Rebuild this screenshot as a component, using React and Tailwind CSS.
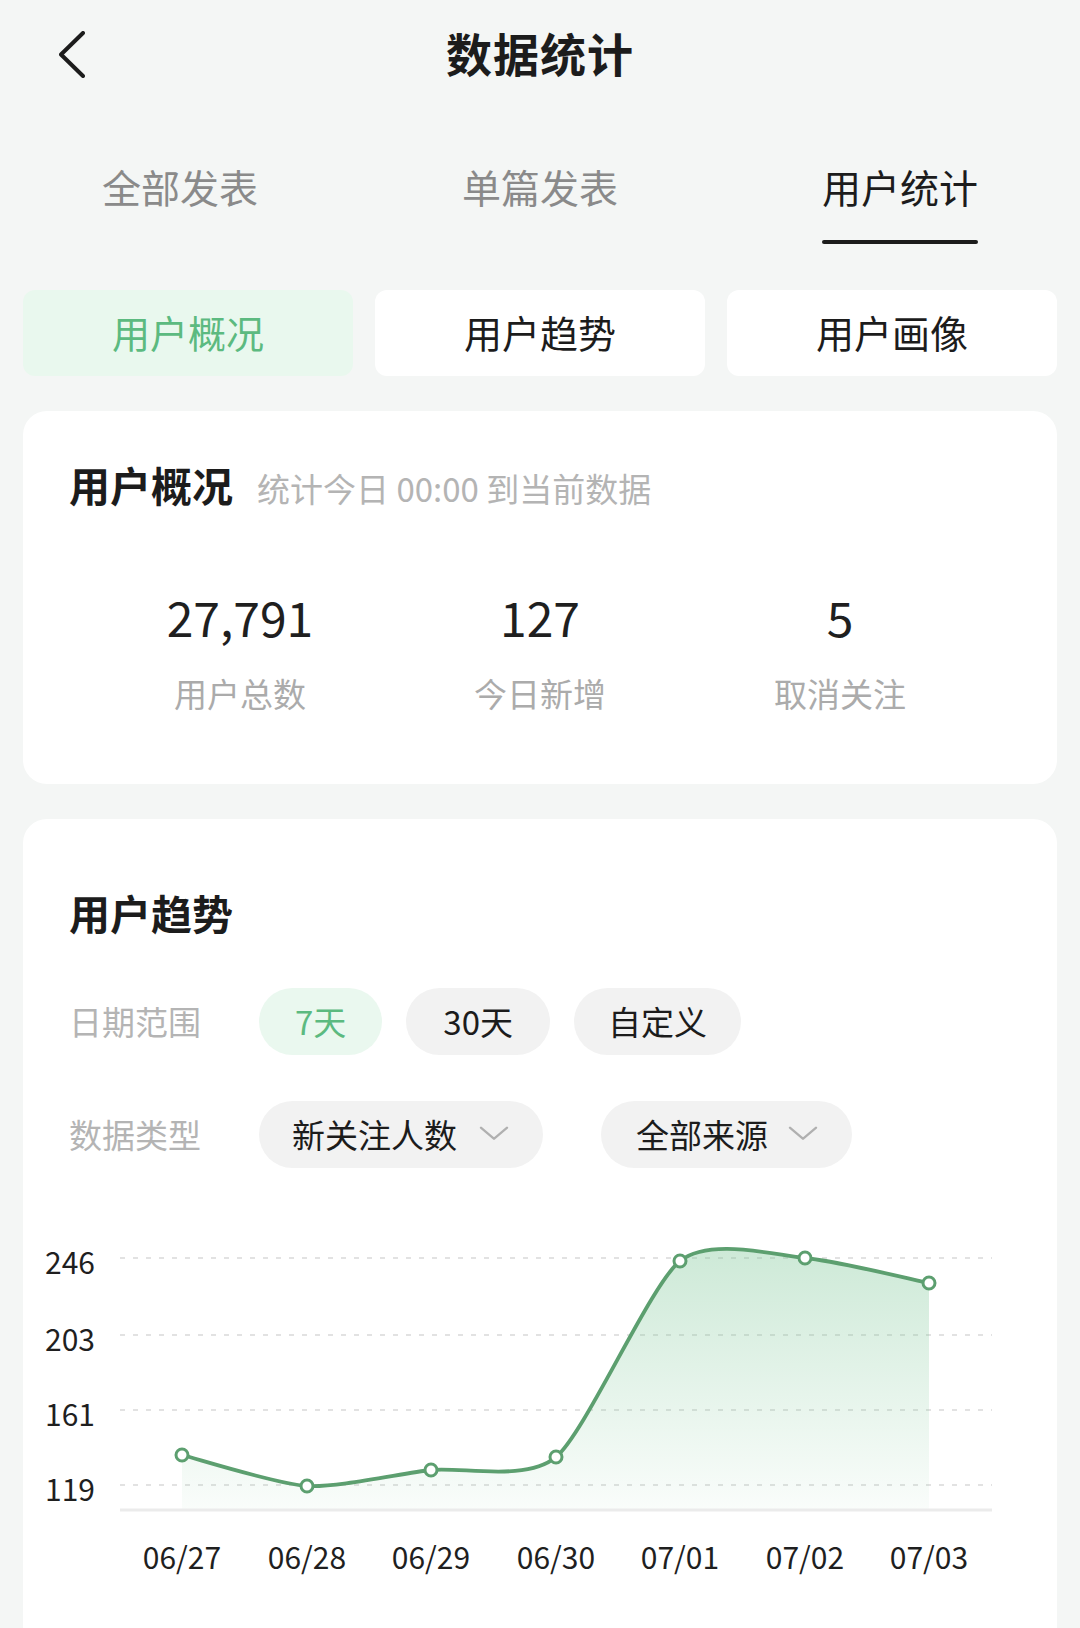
import React from "react";

const tabs = ["全部发表", "单篇发表", "用户统计"];
const subTabs = ["用户概况", "用户趋势", "用户画像"];

const stats = [
  { value: "27,791", label: "用户总数" },
  { value: "127", label: "今日新增" },
  { value: "5", label: "取消关注" },
];

// chart coordinates are in svg px (svg sits at the card's left edge)
const points = [
  { x: 159, y: 256, label: "06/27" },
  { x: 284, y: 287, label: "06/28" },
  { x: 408, y: 271, label: "06/29" },
  { x: 533, y: 258, label: "06/30" },
  { x: 657, y: 62, label: "07/01" },
  { x: 782, y: 59, label: "07/02" },
  { x: 906, y: 84, label: "07/03" },
];

const gridLines = [
  { y: 59, label: "246" },
  { y: 136, label: "203" },
  { y: 211, label: "161" },
  { y: 286, label: "119" },
];

const smoothPath = (pts, k = 0.12) => {
  let d = `M ${pts[0].x} ${pts[0].y}`;
  for (let i = 0; i < pts.length - 1; i++) {
    const p0 = pts[i - 1] || pts[i];
    const p1 = pts[i];
    const p2 = pts[i + 1];
    const p3 = pts[i + 2] || p2;
    const c1x = p1.x + (p2.x - p0.x) * k;
    const c1y = p1.y + (p2.y - p0.y) * k;
    const c2x = p2.x - (p3.x - p1.x) * k;
    const c2y = p2.y - (p3.y - p1.y) * k;
    d += ` C ${c1x} ${c1y}, ${c2x} ${c2y}, ${p2.x} ${p2.y}`;
  }
  return d;
};

const Chevron = () => (
  <svg width="30" height="28" viewBox="0 0 30 28" fill="none">
    <path d="M2 2 L15 15 L28 2" stroke="#b0b0b0" strokeWidth="2.5" strokeLinecap="round" strokeLinejoin="round" transform="translate(0 5) scale(1 0.85)" />
  </svg>
);

const TrendChart = () => {
  const line = smoothPath(points);
  const area = `${line} L 906 311 L 159 311 Z`;
  return (
    <svg width="1034" height="420" viewBox="0 0 1034 420" className="block">
      <defs>
        <linearGradient id="areaFill" x1="0" y1="0" x2="0" y2="1">
          <stop offset="0%" stopColor="#7cc696" stopOpacity="0.38" />
          <stop offset="100%" stopColor="#7cc696" stopOpacity="0.04" />
        </linearGradient>
      </defs>
      {gridLines.map((g) => (
        <g key={g.label}>
          <line x1="97" x2="969" y1={g.y} y2={g.y} stroke="#e2e2e2" strokeWidth="2" strokeDasharray="5 8" />
          <text x="22" y={g.y + 3} dominantBaseline="central" fontSize="30" fill="#1f1f1f" fontFamily="'Noto Sans CJK SC', sans-serif">
            {g.label}
          </text>
        </g>
      ))}
      <path d={area} fill="url(#areaFill)" />
      <line x1="97" x2="969" y1="311" y2="311" stroke="#ebebeb" strokeWidth="3" />
      <path d={line} fill="none" stroke="#5c9f6f" strokeWidth="3.8" strokeLinecap="round" />
      {points.map((p) => (
        <circle key={p.label} cx={p.x} cy={p.y} r="6" fill="#fff" stroke="#5c9f6f" strokeWidth="3" />
      ))}
      {points.map((p) => (
        <text key={p.label} x={p.x} y="357" textAnchor="middle" dominantBaseline="central" fontSize="30" fill="#1f1f1f" fontFamily="'Noto Sans CJK SC', sans-serif">
          {p.label}
        </text>
      ))}
    </svg>
  );
};

export default function App() {
  return (
    <div className="min-h-screen bg-[#f4f6f5] font-['Noto_Sans_CJK_SC',sans-serif] text-[#1c1c1c] overflow-hidden">
      {/* Header */}
      <header className="h-[108px] grid grid-cols-[1fr_auto_1fr] items-center px-[59px]">
        <svg width="26" height="47" viewBox="0 0 26 47" fill="none">
          <path d="M24 2 L2 23.5 L24 45" stroke="#1c1c1c" strokeWidth="4" strokeLinecap="round" strokeLinejoin="round" />
        </svg>
        <h1 className="text-[46px] leading-none font-bold tracking-[1px] -mt-[5px]">数据统计</h1>
        <div />
      </header>

      {/* Top tabs */}
      <div className="grid grid-cols-3 pt-[59px]">
        {tabs.map((t, i) => (
          <div key={t} className="flex flex-col items-center">
            <div className="flex flex-col items-stretch">
              <span className={`text-[39px] leading-[39px] ${i === 2 ? "text-[#1c1c1c]" : "text-[#8a8a8a]"}`}>{t}</span>
              <span className={`mt-[34px] h-[4px] rounded-full ${i === 2 ? "bg-[#1c1c1c]" : "bg-transparent"}`} />
            </div>
          </div>
        ))}
      </div>

      {/* Sub tabs */}
      <div className="grid grid-cols-3 gap-[22px] px-[23px] mt-[46px]">
        {subTabs.map((t, i) => (
          <div
            key={t}
            className={`h-[86px] pb-[3px] rounded-[12px] flex items-center justify-center text-[38px] ${
              i === 0 ? "bg-[#e9f8ee] text-[#5cba80]" : "bg-white text-[#1c1c1c]"
            }`}
          >
            {t}
          </div>
        ))}
      </div>

      {/* Overview card */}
      <section className="mx-[23px] mt-[35px] rounded-[24px] bg-white pt-[52px] pb-[74px]">
        <div className="flex items-baseline px-[46px]">
          <h2 className="text-[41px] leading-[42px] font-bold">用户概况</h2>
          <span className="ml-[24px] text-[33px] leading-[42px] text-[#b4b4b4]">统计今日 00:00 到当前数据</span>
        </div>
        <div className="grid grid-cols-3 px-[67px] mt-[82px]">
          {stats.map((s) => (
            <div key={s.label} className="flex flex-col items-center">
              <span className="text-[48px] leading-[50px] text-[#1f1f1f]">{s.value}</span>
              <span className="mt-[36px] text-[33px] leading-[33px] text-[#ababab]">{s.label}</span>
            </div>
          ))}
        </div>
      </section>

      {/* Trend card */}
      <section className="mx-[23px] mt-[35px] rounded-t-[24px] bg-white pt-[72px] pb-[60px]">
        <h2 className="px-[46px] text-[41px] leading-[42px] font-bold">用户趋势</h2>

        <div className="flex items-center px-[46px] mt-[55px]">
          <span className="w-[190px] text-[33px] text-[#b4b4b4]">日期范围</span>
          <div className="flex gap-[24px]">
            <span className="h-[67px] px-[36px] rounded-full flex items-center text-[33px] bg-[#eaf8ef] text-[#5cba80]">7天</span>
            <span className="h-[67px] px-[37px] rounded-full flex items-center text-[33px] bg-[#f2f2f2]">30天</span>
            <span className="h-[67px] px-[34px] rounded-full flex items-center text-[33px] bg-[#f2f2f2]">自定义</span>
          </div>
        </div>

        <div className="flex items-center px-[46px] mt-[46px]">
          <span className="w-[190px] text-[33px] text-[#b4b4b4]">数据类型</span>
          <div className="flex gap-[58px]">
            <span className="h-[67px] pl-[33px] pr-[34px] rounded-full flex items-center gap-[22px] text-[33px] bg-[#f2f2f2]">
              新关注人数
              <Chevron />
            </span>
            <span className="h-[67px] pl-[35px] pr-[34px] rounded-full flex items-center gap-[20px] text-[33px] bg-[#f2f2f2]">
              全部来源
              <Chevron />
            </span>
          </div>
        </div>

        <div className="mt-[31px]">
          <TrendChart />
        </div>
      </section>
    </div>
  );
}
